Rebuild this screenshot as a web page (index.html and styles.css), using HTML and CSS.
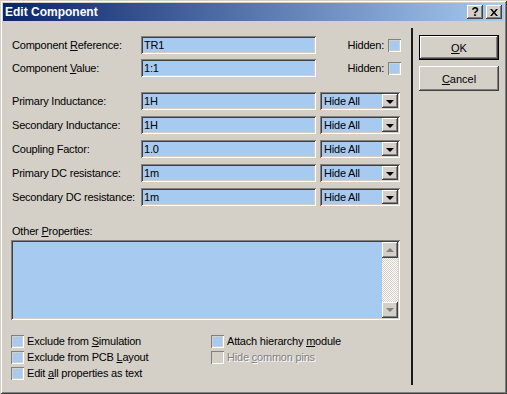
FILE: index.html
```html
<!DOCTYPE html>
<html lang="en">
<head>
  <meta charset="UTF-8">
  <title>Edit Component</title>
  <link rel="stylesheet" href="styles.css">
</head>
<body>
  <div class="window">
    <div class="titlebar">
      <span class="title">Edit Component</span>
      <div class="caption-btns">
        <span class="cap help">?</span>
        <span class="cap close">
          <svg width="8" height="7" viewBox="0 0 8 7"><path d="M0 0h2l2 2.5L6 0h2L5 3.5 8 7H6L4 4.5 2 7H0l3-3.5z" fill="#000"/></svg>
        </span>
      </div>
    </div>

    <div class="body">
      <div class="main">
        <div class="grid top-rows">
          <label>Component <u>R</u>eference:</label>
          <div class="field">TR1</div>
          <div class="hidden"><span>Hidden:</span><span class="check"></span></div>

          <label>Component <u>V</u>alue:</label>
          <div class="field">1:1</div>
          <div class="hidden"><span>Hidden:</span><span class="check"></span></div>
        </div>

        <div class="grid prop-rows">
          <label>Primary Inductance:</label>
          <div class="field">1H</div>
          <div class="select"><span>Hide All</span><span class="drop"></span></div>

          <label>Secondary Inductance:</label>
          <div class="field">1H</div>
          <div class="select"><span>Hide All</span><span class="drop"></span></div>

          <label>Coupling Factor:</label>
          <div class="field">1.0</div>
          <div class="select"><span>Hide All</span><span class="drop"></span></div>

          <label>Primary DC resistance:</label>
          <div class="field">1m</div>
          <div class="select"><span>Hide All</span><span class="drop"></span></div>

          <label>Secondary DC resistance:</label>
          <div class="field">1m</div>
          <div class="select"><span>Hide All</span><span class="drop"></span></div>
        </div>

        <div class="other">
          <label>Other <u>P</u>roperties:</label>
          <div class="textarea">
            <div class="text-body"></div>
            <div class="scrollbar">
              <span class="sb-btn"><span class="arrow up"></span></span>
              <span class="track"></span>
              <span class="sb-btn"><span class="arrow down"></span></span>
            </div>
          </div>
        </div>

        <div class="options">
          <div class="opt"><span class="check"></span><span>Exclude from <u>S</u>imulation</span></div>
          <div class="opt"><span class="check"></span><span>Attach hierarchy <u>m</u>odule</span></div>
          <div class="opt"><span class="check"></span><span>Exclude from PCB <u>L</u>ayout</span></div>
          <div class="opt disabled"><span class="check"></span><span>Hide <u>c</u>ommon pins</span></div>
          <div class="opt"><span class="check"></span><span>Edit <u>a</u>ll properties as text</span></div>
        </div>
      </div>

      <div class="side">
        <button class="btn default"><u>O</u>K</button>
        <button class="btn"><u>C</u>ancel</button>
      </div>
    </div>
  </div>
</body>
</html>
```

FILE: styles.css
```css
body {
  margin: 0;
  font-family: "Liberation Sans", Arial, sans-serif;
  font-size: 11px;
  letter-spacing: -0.2px;
  color: #000;
  background-color: #d4d0c8;
}

.window {
  width: 507px;
  height: 394px;
  box-sizing: border-box;
  padding: 3px;
  display: flex;
  flex-direction: column;
  background-color: #d4d0c8;
  box-shadow: inset 1px 1px #d4d0c8, inset -1px -1px #404040,
              inset 2px 2px #fff, inset -2px -2px #808080;
}

.titlebar {
  height: 18px;
  flex-shrink: 0;
  display: flex;
  align-items: center;
  justify-content: space-between;
  padding: 0 2px;
  background: linear-gradient(to right, #0a246a, #a6caf0);
}

.title {
  color: #fff;
  font-weight: bold;
  font-size: 12px;
  letter-spacing: 0;
}

.caption-btns {
  display: flex;
  gap: 3px;
}

.cap {
  width: 16px;
  height: 14px;
  box-sizing: border-box;
  display: flex;
  align-items: center;
  justify-content: center;
  font-weight: bold;
  font-size: 12px;
  background-color: #d4d0c8;
  box-shadow: inset -1px -1px #404040, inset 1px 1px #fff,
              inset -2px -2px #808080;
}

.body {
  flex: 1;
  display: flex;
}

.main {
  width: 408px;
  box-sizing: border-box;
  padding: 15px 0 0 8px;
}

.side {
  flex: 1;
  display: flex;
  flex-direction: column;
  gap: 6px;
  margin: 7px 0 6px;
  padding: 7px 0 0 6px;
  border-left: 2px solid #1a1a1a;
}

.grid {
  display: grid;
  grid-template-columns: 130px 175px 85px;
  grid-auto-rows: 18px;
  align-items: center;
}

.top-rows {
  row-gap: 5px;
}

.prop-rows {
  margin-top: 15px;
  row-gap: 6px;
}

.grid label {
  padding-left: 1px;
  white-space: nowrap;
}

.field {
  height: 18px;
  box-sizing: border-box;
  padding: 2px 3px;
  line-height: 14px;
  background-color: #a6caf0;
  box-shadow: inset 1px 1px #808080, inset -1px -1px #fff,
              inset 2px 2px #404040, inset -2px -2px #d4d0c8;
}

.hidden {
  display: flex;
  align-items: center;
  justify-content: flex-end;
  gap: 4px;
}

.check {
  width: 13px;
  height: 13px;
  box-sizing: border-box;
  flex-shrink: 0;
  background-color: #a6caf0;
  box-shadow: inset 1px 1px #808080, inset -1px -1px #fff,
              inset 2px 2px #d4d0c8, inset -2px -2px #d4d0c8;
}

.select {
  margin-left: 4px;
  width: 80px;
  height: 18px;
  box-sizing: border-box;
  padding: 2px 2px 2px 4px;
  display: flex;
  align-items: center;
  justify-content: space-between;
  background-color: #a6caf0;
  box-shadow: inset 1px 1px #808080, inset -1px -1px #fff,
              inset 2px 2px #404040, inset -2px -2px #d4d0c8;
}

.drop {
  width: 16px;
  height: 14px;
  box-sizing: border-box;
  display: flex;
  align-items: center;
  justify-content: center;
  background-color: #d4d0c8;
  box-shadow: inset -1px -1px #404040, inset 1px 1px #fff,
              inset -2px -2px #808080;
}

.drop::after {
  content: "";
  border-left: 4px solid transparent;
  border-right: 4px solid transparent;
  border-top: 4px solid #000;
  margin-top: 1px;
}

.other {
  margin-top: 19px;
}

.other label {
  display: block;
  padding-left: 1px;
  line-height: 13px;
  margin-bottom: 2px;
}

.textarea {
  width: 389px;
  height: 80px;
  box-sizing: border-box;
  padding: 2px;
  display: flex;
  background-color: #a6caf0;
  box-shadow: inset 1px 1px #808080, inset -1px -1px #fff,
              inset 2px 2px #404040, inset -2px -2px #d4d0c8;
}

.text-body {
  flex: 1;
}

.scrollbar {
  width: 16px;
  display: flex;
  flex-direction: column;
}

.track {
  flex: 1;
  background: repeating-conic-gradient(#fff 0 25%, #d4d0c8 0 50%) 0 0 / 2px 2px;
}

.sb-btn {
  height: 16px;
  display: flex;
  align-items: center;
  justify-content: center;
  background-color: #d4d0c8;
  box-shadow: inset -1px -1px #404040, inset 1px 1px #fff,
              inset -2px -2px #808080;
}

.arrow {
  border-left: 4px solid transparent;
  border-right: 4px solid transparent;
}

.arrow.up {
  border-bottom: 4px solid #808080;
}

.arrow.down {
  border-top: 4px solid #808080;
}

.options {
  margin-top: 13px;
  display: grid;
  grid-template-columns: 200px 1fr;
  grid-auto-rows: 16px;
  align-items: center;
}

.opt {
  display: flex;
  align-items: center;
  gap: 3px;
}

.opt.disabled {
  color: #808080;
  text-shadow: 1px 1px #fff;
}

.opt.disabled .check {
  background-color: #d4d0c8;
}

.btn {
  width: 80px;
  height: 25px;
  padding: 0;
  border: none;
  font-family: inherit;
  font-size: 11px;
  color: #000;
  background-color: #d4d0c8;
  box-shadow: inset -1px -1px #404040, inset 1px 1px #fff,
              inset -2px -2px #808080;
}

.btn.default {
  border: 1px solid #000;
}
```
